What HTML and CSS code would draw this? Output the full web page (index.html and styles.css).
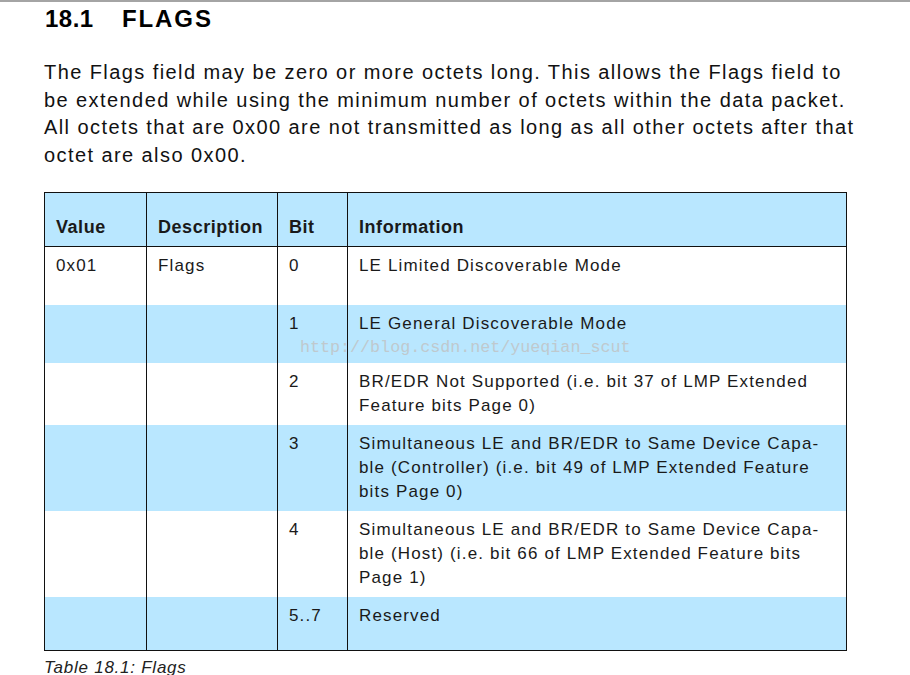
FILE: index.html
```html
<!DOCTYPE html>
<html>
<head>
<meta charset="utf-8">
<link rel="stylesheet" href="styles.css">
</head>
<body>
<div class="page">
  <h1 class="title"><span class="num">18.1</span>FLAGS</h1>
  <p class="intro">The Flags field may be zero or more octets long. This allows the Flags field to<br>be extended while using the minimum number of octets within the data packet.<br>All octets that are 0x00 are not transmitted as long as all other octets after that<br>octet are also 0x00.</p>
  <div class="table-wrap">
    <table class="flags">
      <colgroup>
        <col class="c1"><col class="c2"><col class="c3"><col class="c4">
      </colgroup>
      <thead>
        <tr class="head"><th>Value</th><th>Description</th><th>Bit</th><th>Information</th></tr>
      </thead>
      <tbody>
        <tr class="r1"><td>0x01</td><td>Flags</td><td>0</td><td>LE Limited Discoverable Mode</td></tr>
        <tr class="r2 blue"><td></td><td></td><td>1</td><td>LE General Discoverable Mode</td></tr>
        <tr class="r3"><td></td><td></td><td>2</td><td>BR/EDR Not Supported (i.e. bit 37 of LMP Extended<br>Feature bits Page 0)</td></tr>
        <tr class="r4 blue"><td></td><td></td><td>3</td><td>Simultaneous LE and BR/EDR to Same Device Capa-<br>ble (Controller) (i.e. bit 49 of LMP Extended Feature<br>bits Page 0)</td></tr>
        <tr class="r5"><td></td><td></td><td>4</td><td>Simultaneous LE and BR/EDR to Same Device Capa-<br>ble (Host) (i.e. bit 66 of LMP Extended Feature bits<br>Page 1)</td></tr>
        <tr class="r6 blue"><td></td><td></td><td>5..7</td><td>Reserved</td></tr>
      </tbody>
    </table>
    <div class="watermark">http://blog.csdn.net/yueqian_scut</div>
  </div>
  <p class="caption">Table 18.1: Flags</p>
</div>
</body>
</html>
```
FILE: styles.css
```css
html, body {
  margin: 0;
  padding: 0;
  background: #ffffff;
}
body {
  font-family: "Liberation Sans", Arial, sans-serif;
  color: #111;
  overflow: hidden;
}
.page {
  border-top: 2px solid #a4a4a4;
  padding: 3px 0 0 44px;
  width: 866px;
}
.title {
  margin: 0;
  font-size: 24px;
  line-height: 28px;
  font-weight: bold;
  color: #000;
  padding-left: 1px;
  letter-spacing: 1.9px;
}
.title .num {
  display: inline-block;
  width: 77px;
  letter-spacing: 0.5px;
}
.intro {
  margin: 26px 0 0 0;
  font-size: 20px;
  line-height: 27.5px;
  letter-spacing: 1.42px;
  color: #111;
  white-space: nowrap;
}
.table-wrap {
  position: relative;
  margin-top: 23px;
  width: 803px;
}
.flags {
  border-collapse: collapse;
  width: 802px;
  table-layout: fixed;
  font-size: 17px;
  line-height: 24px;
  letter-spacing: 1.15px;
  color: #1a1a1a;
}
.c1 { width: 102px; }
.c2 { width: 131px; }
.c3 { width: 70px; }
.c4 { width: 499px; }
.flags th, .flags td {
  border-left: 1px solid #111;
  border-right: 1px solid #111;
  text-align: left;
  vertical-align: top;
  padding: 7px 6px 0 11px;
  white-space: nowrap;
}
.flags thead th {
  background: #b9e7ff;
  font-weight: bold;
  font-size: 18px;
  letter-spacing: 0.55px;
  padding-top: 22px;
  border-top: 1px solid #111;
  border-bottom: 1px solid #111;
  height: 54px;
  box-sizing: border-box;
}
.flags tbody tr:last-child td {
  border-bottom: 1px solid #111;
}
.blue td {
  background: #b9e7ff;
}
.r1 td, .r2 td { height: 58px; box-sizing: border-box; }
.r3 td { height: 62px; box-sizing: border-box; }
.r4 td, .r5 td { height: 86px; box-sizing: border-box; }
.r6 td { height: 54px; box-sizing: border-box; }
.watermark {
  position: absolute;
  left: 256px;
  top: 146px;
  font-family: "Liberation Mono", "DejaVu Sans Mono", monospace;
  font-size: 16.7px;
  line-height: 20px;
  color: #bfc9ce;
  white-space: nowrap;
}
.caption {
  margin: 7px 0 0 0;
  font-size: 17px;
  font-style: italic;
  letter-spacing: 0.75px;
  color: #222;
}
```
